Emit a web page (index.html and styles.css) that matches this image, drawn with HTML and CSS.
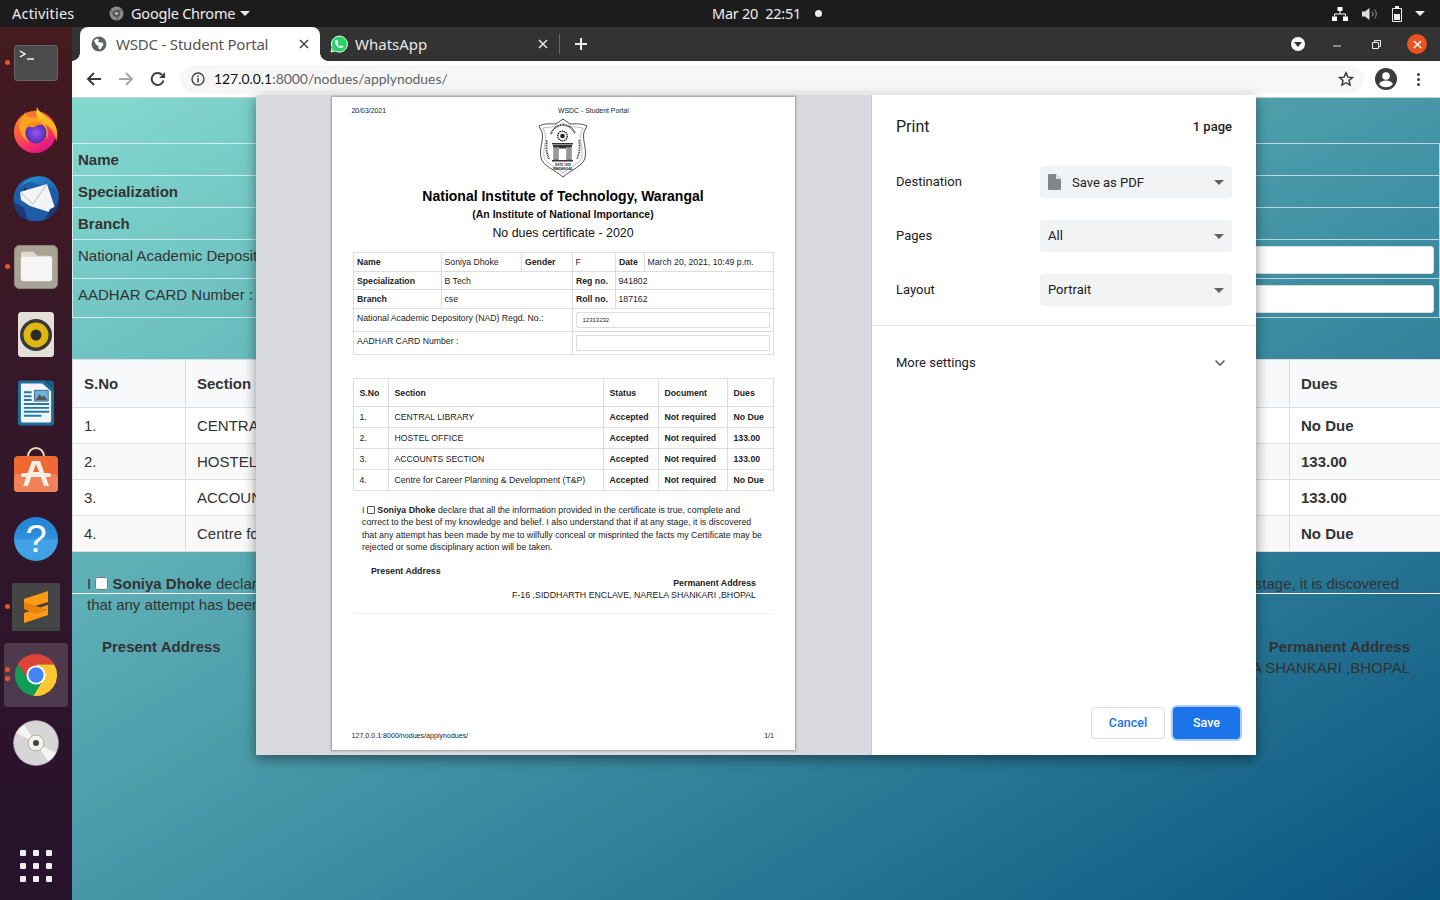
FILE: index.html
```html
<!DOCTYPE html>
<html lang="en">
<head>
<meta charset="utf-8">
<title>WSDC - Student Portal</title>
<link rel="stylesheet" href="styles.css">
</head>
<body>
<div class="desktop">
  <header class="topbar">
    <div class="top-left">
      <span class="activities">Activities</span>
      <span class="appmenu">
        <svg class="appicon" viewBox="0 0 16 16"><circle cx="8" cy="8" r="7.500" fill="#8a8a8a"/><circle cx="8" cy="8" r="3.400" fill="#333"/><circle cx="8" cy="8" r="2.200" fill="#aaa"/><path d="M8 4.600h6M5 9.700 2 4.500M11 9.700 8 15" stroke="#555" stroke-width="1" fill="none"/></svg>
        <span class="appname">Google Chrome</span>
        <i class="tri-down"></i>
      </span>
    </div>
    <div class="clock"><span class="clock-text">Mar 20&nbsp; 22:51</span><i class="clock-dot"></i></div>
    <div class="tray">
      <svg class="tray-net" viewBox="0 0 16 14"><path fill="#fff" d="M5.500 0h5v4h-5zM0 9.500h5V14H0zM11 9.500h5V14h-5z"/><path fill="none" stroke="#fff" d="M8 4v3M2.500 9.500V7h11v2.500"/></svg>
      <svg class="tray-vol" viewBox="0 0 16 14"><path fill="#ddd" d="M0 4.500h3L7.500 1v12L3 9.500H0z"/><path fill="none" stroke="#999" d="M10 4.500a3.500 3.500 0 0 1 0 5M12.500 2.500a6.500 6.500 0 0 1 0 9"/></svg>
      <svg class="tray-bat" viewBox="0 0 10 16"><path fill="none" stroke="#eee" d="M.5 2.500h9v13h-9z"/><path fill="#eee" d="M3 0h4v2H3zM2 8h6v6H2z"/></svg>
      <i class="tri-down tray-tri"></i>
    </div>
  </header>
  <div class="main">
    <nav class="dock">
      <div class="dock-item dock-term"><i class="run"></i>
        <svg viewBox="0 0 44 36"><rect x=".5" y=".5" width="43" height="35" rx="3" fill="#4b4b4b" stroke="#666"/><path d="M6 6l5 3-5 3" fill="none" stroke="#fff" stroke-width="1.400"/><path d="M13 14h7" stroke="#fff" stroke-width="1.400"/></svg>
      </div>
      <div class="dock-item dock-fox">
        <svg viewBox="0 0 48 48"><defs><linearGradient id="fx" x1="0" y1="0" x2=".6" y2="1"><stop offset="0" stop-color="#ff8f1f"/><stop offset=".55" stop-color="#ff4d4a"/><stop offset="1" stop-color="#e31587"/></linearGradient><linearGradient id="fy" x1="0" y1="0" x2="0" y2="1"><stop offset="0" stop-color="#ffe226"/><stop offset="1" stop-color="#ff8a1c"/></linearGradient><radialGradient id="fp"><stop offset="0" stop-color="#8f5cf0"/><stop offset="1" stop-color="#5a2ab8"/></radialGradient></defs><circle cx="23" cy="26" r="22" fill="url(#fx)"/><path d="M25 0c2 7 10 9 16 15 6 6 6 14 4 21-1-9-7-17-13-18-6-2-9-8-7-18z" fill="url(#fy)"/><path d="M7 15c3-4 5-7 6-10 0 3 2 6 5 6 7-1 13 2 16 8 3 6 3 11 1 15 1-8-5-15-13-15-6 0-9 4-9 9 0 4 2 7 4 9-6-3-13-13-10-22z" fill="#ffa31f"/><circle cx="24" cy="27" r="11" fill="url(#fp)"/><path d="M14 20c4-5 14-6 19-1-4-1-8 0-11 2-3 0-6 0-8-1z" fill="#ff8a1c"/></svg>
      </div>
      <div class="dock-item dock-bird">
        <svg viewBox="0 0 50 46"><defs><linearGradient id="tb" x1="0" y1="0" x2="1" y2="1"><stop offset="0" stop-color="#2a9ae0"/><stop offset="1" stop-color="#1a4f93"/></linearGradient></defs><circle cx="25" cy="24" r="22.500" fill="#1f5da8"/><path d="M6 16C12 5 24-1 34 2c8 3 14 11 15 22-3-8-8-11-14-13L20 7c-6 1-11 4-14 9z" fill="url(#tb)"/><path d="M9 17l27-8 8 24-6 4-19-6-9-6z" fill="#f3f4f6"/><path d="M9 17l13 12 14-20" fill="none" stroke="#b6bcc6"/><path d="M2 24c0 11 7 20 15 21l-4-12C8 31 4 28 2 24zM34 45c7-3 14-11 15-21-2 5-6 9-10 10z" fill="#1a3a7a"/><circle cx="14" cy="14" r="1.300" fill="#143460"/></svg>
      </div>
      <div class="dock-item dock-files"><i class="run"></i>
        <svg viewBox="0 0 46 46"><rect x=".5" y=".5" width="44" height="44" rx="5" fill="#a8a395" stroke="#8e897b"/><path d="M7 9a2 2 0 0 1 2-2h11l4 4h13a2 2 0 0 1 2 2v3H7z" fill="#ddd9d2"/><rect x="7" y="12" width="32" height="25" rx="2.500" fill="#f7f6f4"/></svg>
      </div>
      <div class="dock-item dock-rhythm">
        <svg viewBox="0 0 38 46"><rect width="36" height="45" x="1" rx="3.500" fill="#e4e0d8"/><circle cx="19" cy="23" r="16" fill="#3a3a3a"/><circle cx="19" cy="23" r="12.500" fill="#e0b811"/><circle cx="19" cy="23" r="5.500" fill="#2b2b2b"/></svg>
      </div>
      <div class="dock-item dock-writer">
        <svg viewBox="0 0 38 46"><path d="M3 0h24l10 9v34a3 3 0 0 1-3 3H3a3 3 0 0 1-3-3V3a3 3 0 0 1 3-3z" fill="#1d6f9c"/><path d="M3 3h22l9 8v30a2 2 0 0 1-2 2H5a2 2 0 0 1-2-2z" fill="#f3f5f6"/><path d="M27 0h7a3 3 0 0 1 3 3v7z" fill="#175a82"/><path d="M6 11h8v2H6zM6 15h8v2H6zM6 19h8v2H6zM6 23h26v2H6zM6 27h26v2H6zM6 31h26v2H6zM6 35h18v2H6z" fill="#2279aa"/><rect x="17" y="10" width="14" height="11" fill="#6fb5d9" stroke="#3d6f8c"/><path d="M18 20l4-6 3 3 2-2 3 5z" fill="#555"/></svg>
      </div>
      <div class="dock-item dock-store">
        <svg viewBox="0 0 46 46"><path d="M15 10c0-12 16-12 16 0" fill="none" stroke="#efd5bd" stroke-width="2"/><rect y="9" width="44" height="36" x="1" rx="4" fill="#ef6a32"/><rect y="27" width="44" height="18" x="1" rx="4" fill="#f2825a"/><path d="M19 14h8l9 25h-5l-3-9H18l-3 9h-5zM20 25h6l-3-8z" fill="#fcefe7"/><rect x="8" y="26" width="30" height="4" rx="2" fill="#fcefe7"/></svg>
      </div>
      <div class="dock-item dock-help">
        <div class="help-ball">?</div>
      </div>
      <div class="dock-item dock-subl"><i class="run"></i>
        <svg viewBox="0 0 48 48"><rect width="48" height="48" rx="2" fill="#454545"/><path d="M36 8v11L12 26V16z" fill="#ff9a14"/><path d="M12 30v10l24-8V22z" fill="#ff9a14"/><path d="M12 19l24 8-12 4-12-5z" fill="#e8830c"/></svg>
      </div>
      <div class="dock-item dock-chrome"><i class="run run-a"></i><i class="run run-b"></i>
        <svg viewBox="0 0 48 48"><path d="M4.950 13A22 22 0 0 1 43.050 13H24L16.200 28.500z" fill="#db4437"/><path d="M43.050 13A22 22 0 0 1 21 45.800L31.800 28.500 24 13z" fill="#fcc934"/><path d="M21 45.800A22 22 0 0 1 4.950 13L16.200 28.500 31.800 28.500z" fill="#0f9d58"/><circle cx="24" cy="24" r="10" fill="#fff"/><circle cx="24" cy="24" r="8" fill="#4285f4"/></svg>
      </div>
      <div class="dock-item dock-dvd">
        <svg viewBox="0 0 46 46"><circle cx="23" cy="23" r="22.500" fill="#d6d6d6" stroke="#aaa" stroke-width=".5"/><path d="M23 23 3 13a22 22 0 0 1 8-8zM23 23l20 10a22 22 0 0 1-8 8z" fill="#f6f6f6"/><circle cx="23" cy="23" r="8" fill="#f4f1e8" stroke="#b3ab97"/><circle cx="23" cy="23" r="3" fill="#444"/></svg>
      </div>
      <div class="dock-grid">
        <i></i><i></i><i></i><i></i><i></i><i></i><i></i><i></i><i></i>
      </div>
    </nav>
    <div class="browser">
      <div class="tabstrip">
        <div class="tab tab-active">
          <svg class="favicon" viewBox="0 0 16 16"><circle cx="8" cy="8" r="7.500" fill="#5f6368"/><path d="M3 4.500l3-2 2 1-1 2 2 1 2.500 0 1 2-2 3-1 2-2-1V10L5 8.500z" fill="#fff"/></svg>
          <span class="tab-title">WSDC - Student Portal</span>
          <svg class="tab-x" viewBox="0 0 10 10"><path d="M1 1l8 8M9 1l-8 8" stroke="#444" stroke-width="1.500"/></svg>
        </div>
        <div class="tab tab-idle">
          <svg class="favicon wa" viewBox="0 0 18 18"><path d="M1 17l1.200-4.400A8 8 0 1 1 5.300 16z" fill="#25d366" stroke="#fff" stroke-width="1"/><path d="M6.300 4.800c-.5 0-1.300.8-1.300 2 0 3 3.300 6.300 6.300 6.300 1.200 0 2-.8 2-1.500 0-.5-1.700-1.300-2-1.300s-.8.9-1.100.9c-.9 0-2.800-1.900-2.800-2.800 0-.3.800-.6.800-1 0-.3-.7-2.600-1.900-2.600z" fill="#fff"/></svg>
          <span class="tab-title">WhatsApp</span>
          <svg class="tab-x" viewBox="0 0 10 10"><path d="M1 1l8 8M9 1l-8 8" stroke="#e8e8e8" stroke-width="1.500"/></svg>
        </div>
        <i class="tab-sep"></i>
        <svg class="tab-plus" viewBox="0 0 12 12"><path d="M6 0v12M0 6h12" stroke="#eee" stroke-width="2"/></svg>
        <div class="win-controls">
          <span class="win-drop"><i></i></span>
          <svg class="win-min" viewBox="0 0 8 2"><path d="M0 1h8" stroke="#ddd"/></svg>
          <svg class="win-max" viewBox="0 0 9 9"><path d="M.5 2.500h6v6h-6zM2.500 2.500v-2h6v6h-2" fill="none" stroke="#eee"/></svg>
          <span class="win-close"><svg viewBox="0 0 10 10"><path d="M1 1l8 8M9 1l-8 8" stroke="#fff" stroke-width="1.500"/></svg></span>
        </div>
      </div>
      <div class="toolbar">
        <svg class="tool back" viewBox="0 0 16 16"><path d="M15 8H2M8 2 2 8l6 6" fill="none" stroke="#3c3c3c" stroke-width="2"/></svg>
        <svg class="tool fwd" viewBox="0 0 16 16"><path d="M1 8h13M8 2l6 6-6 6" fill="none" stroke="#a8a8a8" stroke-width="2"/></svg>
        <svg class="tool reload" viewBox="0 0 16 16"><path d="M13.500 9.500A6 6 0 1 1 12 3.800" fill="none" stroke="#3c3c3c" stroke-width="2"/><path d="M15 1v6H9z" fill="#3c3c3c"/></svg>
        <div class="omnibox">
          <svg class="info" viewBox="0 0 14 14"><circle cx="7" cy="7" r="6" fill="none" stroke="#444" stroke-width="1.400"/><path d="M7 6v4.500M7 3.500v1.400" stroke="#444" stroke-width="1.500"/></svg>
          <span class="url"><b>127.0.0.1</b>:8000/nodues/applynodues/</span>
          <svg class="star" viewBox="0 0 16 16"><path d="M8 1.800l1.900 4.300 4.600.4-3.500 3 1.100 4.600L8 11.700l-4.100 2.400L5 9.500l-3.500-3 4.600-.4z" fill="none" stroke="#333" stroke-width="1.400"/></svg>
        </div>
        <svg class="avatar" viewBox="0 0 22 22"><circle cx="11" cy="11" r="11" fill="#3c3c3c"/><circle cx="11" cy="8" r="3.800" fill="#fff"/><path d="M4 16c1.500-2.800 4.500-3.500 7-3.500s5.500.7 7 3.500c-1.500 2-4 3.300-7 3.300s-5.500-1.300-7-3.300z" fill="#fff"/></svg>
        <div class="kebab"><i></i><i></i><i></i></div>
      </div>
      <div class="viewport">
        <main class="page">
          <section class="infobox">
            <div class="info-row"><b>Name</b></div>
            <div class="info-row"><b>Specialization</b></div>
            <div class="info-row"><b>Branch</b></div>
            <div class="info-row info-tall"><span>National Academic Depository (NAD) Regd. No.:</span><input class="info-input" type="text"></div>
            <div class="info-row info-tall"><span>AADHAR CARD Number :</span><input class="info-input" type="text"></div>
          </section>
          <table class="dues">
            <colgroup><col class="d1"><col class="d2"><col class="d3"><col class="d4"><col class="d5"></colgroup>
            <thead><tr><th>S.No</th><th>Section</th><th>Status</th><th>Document</th><th>Dues</th></tr></thead>
            <tbody>
              <tr><td>1.</td><td>CENTRAL LIBRARY</td><th>Accepted</th><th>Not required</th><th>No Due</th></tr>
              <tr><td>2.</td><td>HOSTEL OFFICE</td><th>Accepted</th><th>Not required</th><th>133.00</th></tr>
              <tr><td>3.</td><td>ACCOUNTS SECTION</td><th>Accepted</th><th>Not required</th><th>133.00</th></tr>
              <tr><td>4.</td><td>Centre for Career Planning &amp; Development (T&amp;P)</td><th>Accepted</th><th>Not required</th><th>No Due</th></tr>
            </tbody>
          </table>
          <p class="decl decl-first">I <input class="decl-check" type="checkbox"> <b>Soniya Dhoke</b> declare that all the information provided in the certificate is true, complete and correct to the best of my knowledge and belief. I also understand that if at any stage, it is discovered</p>
          <p class="decl">that any attempt has been made by me to wilfully conceal or misprinted the facts my Certificate may be rejected or some disciplinary action will be taken.</p>
          <div class="addr">
            <b>Present Address</b>
            <div class="addr-right"><b>Permanent Address</b><span>F-16 ,SIDDHARTH ENCLAVE, NARELA SHANKARI ,BHOPAL</span></div>
          </div>
        </main>
        <div class="dialog">
          <div class="preview">
            <article class="sheet">
              <div class="sheet-head"><span class="sh-date">20/03/2021</span><span class="sh-title">WSDC - Student Portal</span></div>
              <div class="sheet-body">
                <svg class="crest" viewBox="0 0 50 60">
                  <path d="M25 1 32 6C38 6 43 5 49 8L46 14C44 22 49 30 47 40 45 48 33 52 25 59 17 52 5 48 3 40 1 30 6 22 4 14L1 8C7 5 12 6 18 6z" fill="#fff" stroke="#222" stroke-width=".8"/>
                  <path d="M25 5 30 8C34 9 40 9 45 10L43 15C41 22 45 30 44 39 42 46 32 49 25 55 18 49 8 46 6 39 5 30 9 22 7 15L5 10C10 9 16 9 20 8z" fill="none" stroke="#555" stroke-width=".4"/>
                  <path d="M13 16A12.500 12.500 0 0 1 37 16" fill="none" stroke="#333" stroke-width="1.800" stroke-dasharray="1 .6"/>
                  <path d="M11 41C8 34 8 28 9 22M41 22C42 28 42 34 39 41" fill="none" stroke="#444" stroke-width="1.800" stroke-dasharray="1 .7"/>
                  <circle cx="24.500" cy="18" r="4.800" fill="#fff" stroke="#111" stroke-width="1.300" stroke-dasharray="1.400 .7"/>
                  <circle cx="24.500" cy="18" r="2.300" fill="#222"/>
                  <path d="M14 25h21v1.500H14zM15 27h19v2H15z" fill="#333"/>
                  <path d="M15.500 29h5v13h-5zM28.500 29h5v13h-5z" fill="#555"/>
                  <path d="M16.500 29.500h1v12h-1zM18.500 29.500h1v12h-1zM29.500 29.500h1v12h-1zM31.500 29.500h1v12h-1z" fill="#ddd"/>
                  <path d="M21 29h7v1.500h-7zM14 42h21v1.500H14z" fill="#333"/>
                  <text class="crest-t" x="25" y="47.500" text-anchor="middle">ESTD 1959</text>
                  <text class="crest-b" x="25" y="51.500" text-anchor="middle">WARANGAL</text>
                </svg>
                <h1 class="s-h1">National Institute of Technology, Warangal</h1>
                <h2 class="s-h2">(An Institute of National Importance)</h2>
                <h3 class="s-h3">No dues certificate - 2020</h3>
                <table class="s-table s-info">
                  <colgroup><col class="i1"><col class="i2"><col class="i3"><col class="i4"><col class="i5"><col class="i6"></colgroup>
                  <tr class="r19"><th>Name</th><td>Soniya Dhoke</td><th>Gender</th><td>F</td><th>Date</th><td>March 20, 2021, 10:49 p.m.</td></tr>
                  <tr class="r18"><th>Specialization</th><td colspan="2">B Tech</td><th>Reg no.</th><td colspan="2">941802</td></tr>
                  <tr class="r19"><th>Branch</th><td colspan="2">cse</td><th>Roll no.</th><td colspan="2">187162</td></tr>
                  <tr class="r23"><td colspan="3" class="top">National Academic Depository (NAD) Regd. No.:</td><td colspan="3" class="s-field"><span class="s-input">12313232</span></td></tr>
                  <tr class="r23"><td colspan="3" class="top">AADHAR CARD Number :</td><td colspan="3" class="s-field"><span class="s-input"></span></td></tr>
                </table>
                <table class="s-table s-dues">
                  <colgroup><col class="s1"><col class="s2"><col class="s3"><col class="s4"><col class="s5"></colgroup>
                  <tr class="r28"><th>S.No</th><th>Section</th><th>Status</th><th>Document</th><th>Dues</th></tr>
                  <tr class="r21"><td>1.</td><td>CENTRAL LIBRARY</td><th>Accepted</th><th>Not required</th><th>No Due</th></tr>
                  <tr class="r21"><td>2.</td><td>HOSTEL OFFICE</td><th>Accepted</th><th>Not required</th><th>133.00</th></tr>
                  <tr class="r21"><td>3.</td><td>ACCOUNTS SECTION</td><th>Accepted</th><th>Not required</th><th>133.00</th></tr>
                  <tr class="r21"><td>4.</td><td>Centre for Career Planning &amp; Development (T&amp;P)</td><th>Accepted</th><th>Not required</th><th>No Due</th></tr>
                </table>
                <p class="s-decl">I <i class="s-check"></i> <b>Soniya Dhoke</b> declare that all the information provided in the certificate is true, complete and correct to the best of my knowledge and belief. I also understand that if at any stage, it is discovered that any attempt has been made by me to wilfully conceal or misprinted the facts my Certificate may be rejected or some disciplinary action will be taken.</p>
                <div class="s-present"><b>Present Address</b></div>
                <div class="s-perm"><b>Permanent Address</b><span>F-16 ,SIDDHARTH ENCLAVE, NARELA SHANKARI ,BHOPAL</span></div>
                <hr class="s-hr">
              </div>
              <div class="sheet-foot"><span>127.0.0.1:8000/nodues/applynodues/</span><span>1/1</span></div>
            </article>
          </div>
          <aside class="panel">
            <div class="p-head"><span class="p-title">Print</span><span class="p-count">1 page</span></div>
            <div class="p-row p-first"><span>Destination</span>
              <div class="select"><svg class="doc" viewBox="0 0 14 16"><path d="M2 0h7l5 5v10a1 1 0 0 1-1 1H2a1 1 0 0 1-1-1V1a1 1 0 0 1 1-1z" fill="#80868b"/><path d="M9 0l5 5H9z" fill="#dfe1e5"/></svg><span class="sel-pdf">Save as PDF</span><i class="sel-arrow"></i></div>
            </div>
            <div class="p-row"><span>Pages</span><div class="select"><span>All</span><i class="sel-arrow"></i></div></div>
            <div class="p-row"><span>Layout</span><div class="select"><span>Portrait</span><i class="sel-arrow"></i></div></div>
            <hr class="p-hr">
            <div class="p-more"><span>More settings</span><svg viewBox="0 0 12 8"><path d="M1.500 1.500 6 6l4.500-4.500" fill="none" stroke="#5f6368" stroke-width="1.600"/></svg></div>
            <div class="p-foot"><button class="btn btn-cancel" type="button">Cancel</button><button class="btn btn-save" type="button">Save</button></div>
          </aside>
        </div>
      </div>
    </div>
  </div>
</div>
</body>
</html>
```
FILE: styles.css
```css
* { box-sizing: border-box; }
html, body { margin: 0; height: 100%; overflow: hidden; }
body { font-family: "Liberation Sans", Arial, sans-serif; }
.desktop { width: 1440px; height: 900px; display: flex; flex-direction: column; overflow: hidden; }

/* top bar */
.topbar { height: 27px; flex: none; background: #1c1c1c; color: #eee; display: flex; align-items: center; font: 14.500px/27px "Noto Sans", sans-serif; }
.top-left { width: 712px; flex: none; display: flex; padding-left: 12px; }
.activities { width: 97px; flex: none; letter-spacing: .2px; }
.appmenu { display: flex; align-items: center; }
.appname { letter-spacing: -.22px; }
.appicon { width: 15px; height: 15px; margin-right: 7px; }
.tri-down { width: 0; height: 0; border: 5px solid transparent; border-top: 5px solid #eee; border-bottom: 0; margin-left: 5px; }
.clock { display: flex; align-items: center; }
.clock-text { letter-spacing: -.25px; }
.clock-dot { width: 7px; height: 7px; border-radius: 50%; background: #eee; margin-left: 14px; }
.tray { margin-left: auto; display: flex; align-items: center; padding-right: 15px; }
.tray-net { width: 16px; height: 14px; }
.tray-vol { width: 16px; height: 14px; margin-left: 14px; }
.tray-bat { width: 10px; height: 16px; margin-left: 14px; }
.tray-tri { margin-left: 13px; }

.main { flex: 1; display: flex; min-height: 0; }

/* dock */
.dock { width: 72px; flex: none; background: linear-gradient(180deg, #451a20 0, #34182a 45%, #27122c 100%); position: relative; display: flex; flex-direction: column; align-items: center; }
.dock-item { width: 64px; display: flex; align-items: center; justify-content: center; position: relative; }
.dock-term { height: 36px; margin-top: 18px; }
.dock-term svg { width: 44px; height: 36px; }
.dock-fox { height: 46px; margin-top: 26px; }
.dock-fox svg { width: 46px; height: 46px; }
.dock-bird { height: 46px; margin-top: 22px; }
.dock-bird svg { width: 50px; height: 46px; }
.dock-files { height: 46px; margin-top: 23px; }
.dock-files svg { width: 45px; height: 45px; }
.dock-rhythm { height: 46px; margin-top: 22px; }
.dock-rhythm svg { width: 38px; height: 46px; }
.dock-writer { height: 46px; margin-top: 22px; }
.dock-writer svg { width: 37px; height: 46px; }
.dock-store { height: 46px; margin-top: 21px; }
.dock-store svg { width: 46px; height: 46px; }
.dock-help { height: 46px; margin-top: 23px; }
.help-ball { width: 44px; height: 44px; border-radius: 50%; background: linear-gradient(180deg, #1f86d6 0, #2f8fdc 50%, #44a3e6 52%, #3da0e4 100%); color: #fff; font: 400 38px/44px "Liberation Sans", sans-serif; text-align: center; }
.dock-subl { height: 48px; margin-top: 21px; }
.dock-subl svg { width: 48px; height: 48px; }
.dock-chrome { height: 64px; margin-top: 12px; background: rgba(255,255,255,.16); border-radius: 3px; }
.dock-chrome svg { width: 46px; height: 46px; }
.dock-dvd { height: 46px; margin-top: 13px; }
.dock-dvd svg { width: 46px; height: 46px; }
.run { position: absolute; left: 1px; top: 50%; width: 5px; height: 5px; margin-top: -3px; border-radius: 50%; background: #e95420; }
.run-a { margin-top: -8px; }
.run-b { margin-top: 1px; }
.dock-grid { position: absolute; left: 20px; top: 823px; width: 32px; display: grid; grid-template-columns: repeat(3, 6px); gap: 7px; }
.dock-grid i { width: 6px; height: 6px; border-radius: 1px; background: #eee; }

/* browser frame */
.browser { flex: 1; min-width: 0; display: flex; flex-direction: column; }
.tabstrip { height: 34px; flex: none; background: #333334; display: flex; align-items: stretch; padding-left: 8px; font: 15px/34px "Noto Sans", sans-serif; }
.tab { display: flex; align-items: center; position: relative; width: 240px; padding-left: 11px; }
.tab-active { background: #fff; color: #555; border-radius: 8px 8px 0 0; }
.tab-active .tab-title { letter-spacing: -.2px; }
.tab-active::before, .tab-active::after { content: ""; position: absolute; bottom: 0; width: 8px; height: 8px; }
.tab-active::before { left: -8px; background: radial-gradient(circle at 0 0, transparent 7.500px, #fff 8px); }
.tab-active::after { right: -8px; background: radial-gradient(circle at 100% 0, transparent 7.500px, #fff 8px); }
.tab-idle { color: #e8e8e8; width: 240px; padding-left: 10px; }
.tab-idle .tab-title { margin-left: 7px; }
.favicon { width: 16px; height: 16px; flex: none; }
.wa { width: 18px; height: 18px; }
.tab-title { margin-left: 9px; white-space: nowrap; }
.tab-x { width: 10px; height: 10px; position: absolute; right: 11px; top: 12px; }
.tab-idle .tab-x { right: 12px; }
.tab-sep { width: 1px; height: 20px; background: #6a6a6a; align-self: center; position: relative; left: -1px; }
.tab-plus { width: 12px; height: 12px; align-self: center; margin-left: 14px; }
.win-controls { margin-left: auto; display: flex; align-items: center; padding-right: 13px; }
.win-drop { width: 14px; height: 14px; border-radius: 50%; background: #fff; position: relative; }
.win-drop i { position: absolute; left: 3px; top: 5px; border: 4px solid transparent; border-top: 5px solid #333; border-bottom: 0; }
.win-min { width: 8px; height: 2px; margin-left: 28px; margin-top: 4px; }
.win-max { width: 9px; height: 9px; margin-left: 31px; }
.win-close { width: 20px; height: 20px; border-radius: 50%; background: #e95420; margin-left: 26px; display: flex; align-items: center; justify-content: center; }
.win-close svg { width: 9px; height: 9px; }

.toolbar { height: 37px; flex: none; background: #fff; border-bottom: 1px solid #cfcfcf; display: flex; align-items: center; padding-left: 14px; }
.tool { width: 16px; height: 16px; flex: none; }
.fwd { margin-left: 16px; }
.reload { margin-left: 16px; }
.omnibox { width: 1184px; height: 28px; margin-left: 14px; border-radius: 14px; background: #f7f7f7; display: flex; align-items: center; padding-left: 11px; flex: none; }
.info { width: 14px; height: 14px; flex: none; }
.url { margin-left: 9px; font: 13.900px/28px Lato, sans-serif; color: #5f6368; }
.url b { font-weight: 400; color: #111; }
.star { width: 16px; height: 16px; margin-left: auto; margin-right: 10px; }
.avatar { width: 22px; height: 22px; margin-left: 11px; flex: none; }
.kebab { margin-left: 20px; display: flex; flex-direction: column; gap: 2px; }
.kebab i { width: 3px; height: 3px; border-radius: 50%; background: #3c3c3c; }

/* page behind dialog */
.viewport { flex: 1; position: relative; min-height: 0; background: linear-gradient(to bottom right, #84d9cf, #0a5480); }
.page { color: #333; font-size: 15px; line-height: 21px; padding-top: 45px; }
.infobox { border: 1px solid rgba(255,255,255,.65); }
.info-row { height: 32px; padding: 5px; display: flex; border-bottom: 1px solid rgba(255,255,255,.65); }
.info-row:last-child { border-bottom: 0; height: 38px; }
.info-tall { height: 39px; justify-content: space-between; }
.info-input { width: 684px; height: 28px; border: 1px solid #ddd; border-radius: 3px; background: #fff; margin: 1px 0 0; }
.dues { width: 1368px; margin-top: 41px; border-collapse: collapse; table-layout: fixed; background: #fff; font-size: 15px; color: #333; }
.d1 { width: 113px; } .d2 { width: 620px; } .d3 { width: 242px; } .d4 { width: 242px; } .d5 { width: 151px; }
.dues th, .dues td { border: 1px solid #ddd; padding: 7px 11px; height: 36px; text-align: left; }
.dues thead th { height: 48px; background: #f8f9fa; }
.dues tbody tr:nth-child(even) { background: #f9f9f9; }
.decl { margin: 0; padding-left: 15px; white-space: nowrap; }
.decl-first { margin-top: 21px; height: 21px; border-bottom: 1px solid #fff; }
.decl-check { width: 13px; height: 13px; margin: 0; vertical-align: -1px; }
.addr { display: flex; justify-content: space-between; margin-top: 21px; padding: 0 30px; }
.addr-right { display: flex; flex-direction: column; align-items: flex-end; }

/* print dialog */
.dialog { position: absolute; left: 184px; top: -3px; width: 1000px; height: 660px; display: flex; background: #fff; box-shadow: 0 4px 12px rgba(0,0,0,.45); }
.preview { width: 616px; flex: none; background: #d9dadf; padding: 2px 77px 5px 76px; box-shadow: inset -1px 0 0 #ccc; }
.sheet { width: 463px; height: 653px; background: #fff; box-shadow: 0 0 2px 1px rgba(0,0,0,.3); color: #222; display: flex; flex-direction: column; }
.sheet-head { display: flex; padding: 10px 0 0 19.500px; font-size: 6.900px; line-height: 8px; flex: none; }
.sh-date { width: 206.500px; }
.sheet-body { padding: 0 22px 0 21px; flex: 1; text-align: center; }
.crest { display: block; width: 50px; height: 60px; margin: 3px auto 0; }
.crest-t { font: bold 3px "Liberation Sans", sans-serif; fill: #222; }
.crest-b { font: bold 3.400px "Liberation Sans", sans-serif; fill: #222; }
.s-h1 { margin: 10px 0 0; font-size: 14px; line-height: 17px; color: #000; }
.s-h2 { margin: 3px 0 0; font-size: 10.500px; line-height: 13px; color: #111; }
.s-h3 { margin: 4px 0 0; font-size: 12.400px; line-height: 16px; font-weight: 400; color: #111; }
.s-table { width: 420px; border-collapse: collapse; table-layout: fixed; font-size: 8.700px; line-height: 10px; text-align: left; }
.s-table th, .s-table td { border: 1px solid #ddd; padding: 0 3px; white-space: nowrap; }
.s-info { margin-top: 11px; }
.s-info td { padding-left: 2.500px; padding-right: 2.500px; }
.s-info td.top { padding-left: 3px; }
.s-info td.s-field { padding-right: 3.500px; }
.i1 { width: 88px; } .i2 { width: 80px; } .i3 { width: 51px; } .i4 { width: 43px; } .i5 { width: 29px; } .i6 { width: 129px; }
.r19 { height: 19px; } .r18 { height: 18px; } .r23 { height: 23px; }
.s-table td.top { vertical-align: top; padding-top: 4px; }
.s-input { display: block; height: 16px; border: 1px solid #ddd; border-radius: 1px; font-size: 6px; line-height: 14px; padding-left: 6px; }
.s-dues { margin-top: 23px; }
.s1 { width: 35px; } .s2 { width: 215px; } .s3 { width: 55px; } .s4 { width: 69px; } .s5 { width: 46px; }
.s-dues th, .s-dues td { padding: 0 5.500px; }
.r28 { height: 28px; } .r21 { height: 21px; }
.s-decl { margin: 13px 10px 0 9px; font-size: 8.800px; line-height: 12.400px; text-align: left; }
.s-check { display: inline-block; width: 8px; height: 8px; border: 1px solid #555; border-radius: 1px; vertical-align: -1px; }
.s-present { text-align: left; padding-left: 18px; margin-top: 11px; font-size: 8.800px; line-height: 12px; }
.s-perm { display: flex; flex-direction: column; align-items: flex-end; padding-right: 17px; font-size: 8.800px; line-height: 12px; }
.s-hr { border: 0; border-top: 1px solid #eee; margin: 12px 0 0; }
.sheet-foot { flex: none; display: flex; justify-content: space-between; padding: 0 21px 10px 19.500px; font-size: 7.100px; line-height: 8px; }

.panel { flex: 1; display: flex; flex-direction: column; font: 13px/16px Roboto, sans-serif; color: #202124; }
.p-head { height: 64px; flex: none; margin: 0 24px; display: flex; justify-content: space-between; align-items: center; }
.p-title { font-size: 16px; }
.p-count { font-size: 13px; font-weight: 500; }
.p-row { display: flex; justify-content: space-between; align-items: center; margin: 9px 24px 13px; height: 32px; flex: none; }
.p-first { margin-top: 7px; }
.select { width: 192px; height: 32px; background: #f1f3f4; border-radius: 4px; display: flex; align-items: center; padding: 0 8px; position: relative; }
.sel-pdf { padding-top: 2px; }
.doc { width: 14px; height: 16px; margin-right: 11px; margin-left: -1px; }
.sel-arrow { position: absolute; right: 8px; top: 14px; border: 5px solid transparent; border-top: 5px solid #5f6368; border-bottom: 0; }
.p-hr { width: 100%; border: 0; border-top: 1px solid #e8eaed; margin: 6px 0 0; flex: none; }
.p-more { height: 74px; flex: none; margin: 0 24px; display: flex; justify-content: space-between; align-items: center; padding-right: 6px; }
.p-more svg { width: 12px; height: 8px; }
.p-foot { margin-top: auto; display: flex; justify-content: flex-end; gap: 8px; padding: 0 16px 16px; }
.btn { height: 32px; border-radius: 4px; font: 500 12.500px/16px Roboto, sans-serif; padding: 0; }
.btn-cancel { width: 74px; background: #fff; border: 1px solid #dadce0; color: #1a73e8; }
.btn-save { width: 67px; background: #1a73e8; border: 0; color: #fff; box-shadow: 0 0 0 2px #aecbfa; }
```
